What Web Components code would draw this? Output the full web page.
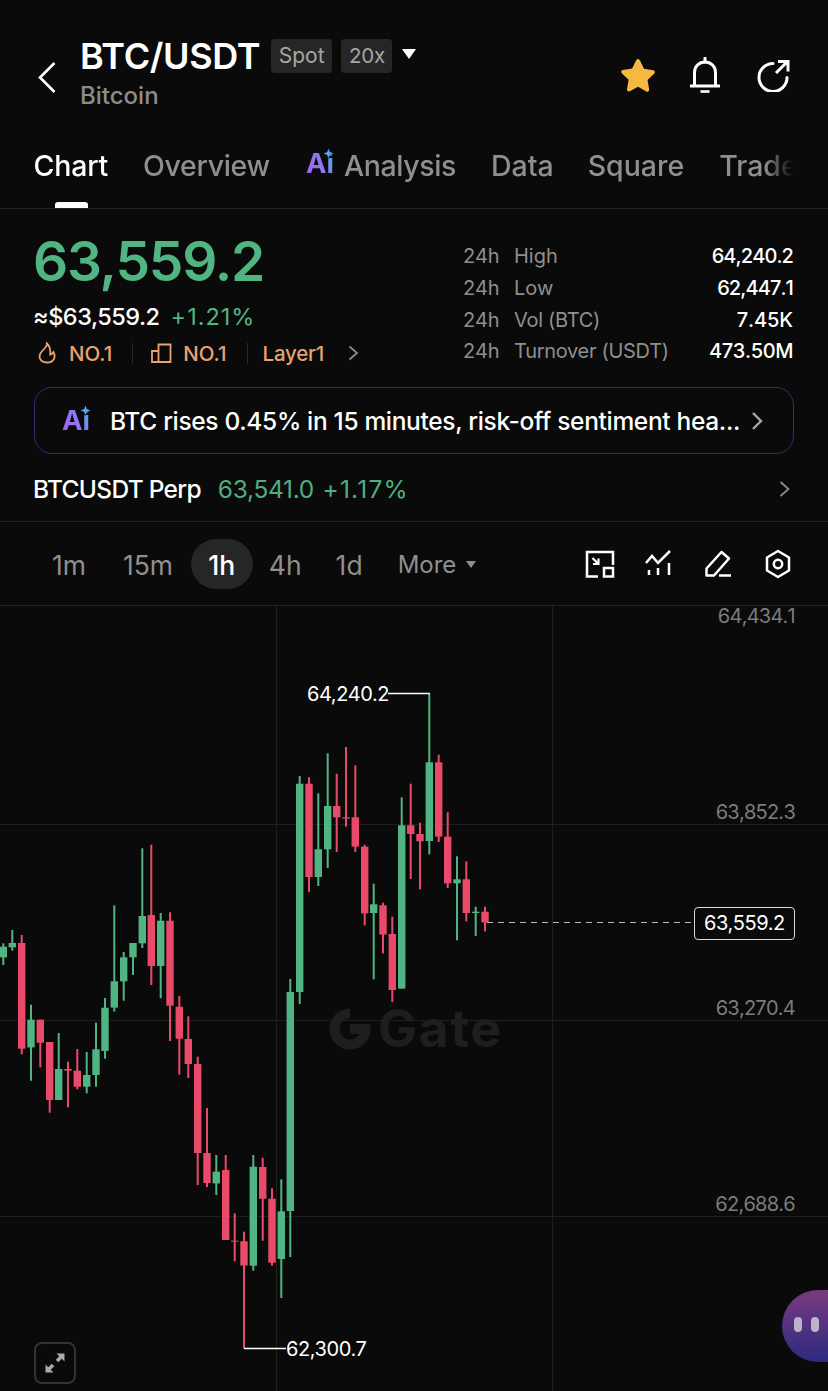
<!DOCTYPE html>
<html lang="en">
<head>
<meta charset="utf-8">
<title>BTC/USDT</title>
<style>
html,body{margin:0;padding:0;background:#0a0a0a;}
body{width:828px;height:1391px;overflow:hidden;font-family:Inter,"Liberation Sans",sans-serif;color:#fff;display:flex;flex-direction:column;}
</style>
</head>
<body>
<app-header></app-header>
<tab-bar></tab-bar>
<price-panel></price-panel>
<time-bar></time-bar>
<kline-chart></kline-chart>
<script>
function def(name, html){
  customElements.define(name, class extends HTMLElement{
    constructor(){super();this.attachShadow({mode:'open'}).innerHTML=html;}
  });
}
const AI_CSS = `.ai{position:relative;display:inline-block;width:29px;height:28px;line-height:28px;font-size:27.5px;font-weight:700;flex:none}
.ai b{font-weight:700;background:linear-gradient(65deg,#a35ff0 0%,#8f78f2 55%,#58a6f5 85%);-webkit-background-clip:text;background-clip:text;color:transparent}
.ai svg{position:absolute;left:17.5px;top:-1px}`;
const AI = `<span class="ai"><b>Ai</b><svg width="11" height="11" viewBox="0 0 11 11"><path d="M5.500 0l1.500 4 4 1.500-4 1.500-1.500 4-1.500-4-4-1.500 4-1.500z" fill="#58a6f5" stroke="#0a0a0a" stroke-width=".4"/></svg></span>`;

def('app-header', `<style>
:host{display:flex;align-items:flex-start;height:130px;box-sizing:border-box;padding:38px 38px 0 38px;flex:none;position:relative}
.back{margin-top:23px;width:18px;height:32px;flex:none}
.col{margin-left:24px;display:flex;flex-direction:column}
.top{display:flex;align-items:center;height:36px}
h1{margin:0;font-size:36px;line-height:36px;font-weight:600;letter-spacing:-.35px}
.b{height:34px;line-height:34px;padding:0 7.5px;background:#262626;border-radius:4px;color:#a6a6a6;font-size:21px;margin-left:9px;box-sizing:border-box}
.b.first{margin-left:11px}
.b.x{font-size:20.5px;letter-spacing:-.3px;padding:0 7.5px 0 8px}
.tri{margin-left:10px;margin-top:-4px}
.sub{font-size:24px;line-height:28px;color:#8c8c8c;margin-top:8px;font-weight:500}
.sp{flex:1}
.ic{display:flex;align-items:center;margin-top:19px}
</style>
<svg class="back" viewBox="0 0 18 32"><path d="M16.500 2L2 16.500 16.500 31" fill="none" stroke="#fff" stroke-width="2.600"/></svg>
<div class="col">
  <div class="top"><h1>BTC/USDT</h1><span class="b first">Spot</span><span class="b x">20x</span>
    <svg class="tri" width="14" height="10" viewBox="0 0 14 10"><path d="M0 0h14L7 10z" fill="#fff"/></svg></div>
  <div class="sub">Bitcoin</div>
</div>
<div class="sp"></div>
<div class="ic">
  <svg width="38" height="36" viewBox="0 0 38 36" style="margin-right:32px"><path d="M19 1.500c.8 0 1.500.5 1.900 1.200l4.500 9.200 10 1.500c1.700.3 2.300 2.300 1.100 3.500l-7.300 7.100 1.700 10c.3 1.700-1.500 3-3 2.200L19 31.200l-8.900 4.700c-1.500.8-3.300-.5-3-2.200l1.700-10-7.300-7.100c-1.200-1.200-.6-3.200 1.100-3.500l10-1.500 4.500-9.200c.4-.7 1.100-1.200 1.900-1.200z" fill="#f5b942" transform="translate(1.400 0.800) scale(.93 .93)"/></svg>
  <svg width="32" height="36" viewBox="0 0 32 36" style="margin-right:35px"><path d="M5.500 28.500V15.500C5.500 9.500 10 5 16 5s10.500 4.500 10.500 10.500v13" fill="none" stroke="#fff" stroke-width="3"/><path d="M1 29h30" stroke="#fff" stroke-width="3"/><path d="M16 1v4" stroke="#fff" stroke-width="3" stroke-linecap="round"/><path d="M11.500 34.500h9" stroke="#fff" stroke-width="2.600"/></svg>
  <svg width="34" height="34" viewBox="0 0 34 34"><path d="M17 5.500A14 14 0 1 0 31 19.500" fill="none" stroke="#fff" stroke-width="3" stroke-linecap="round"/><path d="M20 15L31 4M22 3.500h10v10" fill="none" stroke="#fff" stroke-width="3"/></svg>
</div>`);

def('tab-bar', `<style>
:host{display:block;flex:none;height:79px;box-sizing:border-box;border-bottom:1px solid #222;position:relative}
.row{display:flex;align-items:center;height:70px;padding-left:33.5px;font-size:28.5px;font-weight:500;color:#8f8f8f;white-space:nowrap;width:793px;box-sizing:border-box;overflow:hidden;-webkit-mask-image:linear-gradient(90deg,#000 96.500%,transparent 100%);mask-image:linear-gradient(90deg,#000 96.500%,transparent 100%)}
.row>span{display:block;flex:none}
.on{color:#fff}
.an{display:flex!important;align-items:center;margin-left:36px;height:40px}
.an .ai{margin-right:9px;margin-top:-5px}
${AI_CSS}
i{position:absolute;left:55px;bottom:0;width:33px;height:6px;background:#fff;border-radius:3px 3px 0 0}
</style>
<div class="row"><span class="on" style="letter-spacing:-.2px">Chart</span><span style="margin-left:35px;letter-spacing:-.3px">Overview</span><span class="an">${AI}<span style="letter-spacing:-.4px">Analysis</span></span><span style="margin-left:35px">Data</span><span style="margin-left:34px">Square</span><span style="margin-left:35px">Trade</span></div>
<i></i>`);

def('price-panel', `<style>
:host{display:block;flex:none;height:313px;box-sizing:border-box;padding:0 34px;border-bottom:1px solid #222}
.top{display:flex;justify-content:space-between;height:178px}
.l{padding-top:19px}
.p{font-size:55px;line-height:66px;font-weight:600;color:#50b583;letter-spacing:-1.200px;margin-left:-1px}
.u{font-size:23.5px;line-height:30px;margin-top:8px;margin-left:-1px;display:flex;font-weight:500}
.u span{letter-spacing:-.5px}
.u b{font-weight:400;color:#50b583;letter-spacing:1px;margin-left:11px}
.r{display:flex;align-items:center;height:30px;margin-top:6px;font-size:20.5px;font-weight:500;color:#e8a272}
.r u{width:1px;height:21px;background:#2a2a2a;display:block}
.st{display:grid;grid-template-columns:51px 1fr auto;grid-auto-rows:31.700px;align-items:center;width:330px;margin-right:1px;padding-top:31.500px;font-size:20px;color:#8f8f8f;box-sizing:content-box;align-content:start}
.st span:nth-child(3n){color:#fff;text-align:right;font-weight:500;letter-spacing:-.9px;font-kerning:none}
.lb{letter-spacing:-.3px}
</style>
<div class="top">
 <div class="l">
  <div class="p">63,559.2</div>
  <div class="u"><span>≈$63,559.2</span> <b>+1.21%</b></div>
  <div class="r">
   <svg width="20" height="22" viewBox="0 0 20 22" style="margin-left:3px"><path d="M10 1.500c.6 3-3.600 5.500-6.300 9.400C1.500 14.200 2.300 20.500 10 20.500s8.800-6.300 6.400-10.500c-.9 1.500-2 2.300-3.200 2.500C13.600 8.500 12.500 4 10 1.500z" fill="none" stroke="#e8a272" stroke-width="1.800"/></svg>
   <span style="margin-left:12px">NO.1</span><u style="margin-left:20px"></u>
   <svg width="21" height="20" viewBox="0 0 21 20" style="margin-left:18px"><path d="M1 19V8h6.500v11zM7.500 19V1.500h12V19zM1 19h18.500" fill="none" stroke="#e8a272" stroke-width="1.800"/></svg>
   <span style="margin-left:11px">NO.1</span><u style="margin-left:20px"></u>
   <span style="margin-left:15px;letter-spacing:-.2px">Layer1</span>
   <svg width="11" height="16" viewBox="0 0 11 16" style="margin-left:24px"><path d="M1.500 1.500L9 8l-7.500 6.500" fill="none" stroke="#8f8f8f" stroke-width="1.700"/></svg>
  </div>
 </div>
 <div class="st">
  <span>24h</span><span>High</span><span>64,240.2</span>
  <span>24h</span><span>Low</span><span>62,447.1</span>
  <span>24h</span><span class="lb">Vol (BTC)</span><span style="letter-spacing:-.1px">7.45K</span>
  <span>24h</span><span class="lb">Turnover (USDT)</span><span style="letter-spacing:-.4px">473.50M</span>
 </div>
</div>
<ai-banner></ai-banner>
<perp-row></perp-row>`);

def('ai-banner', `<style>
:host{display:flex;align-items:center;height:67px;box-sizing:border-box;border:1.500px solid #3a2a78;border-radius:18px;padding:0 29px 0 27px;font-size:24.5px;font-weight:500;white-space:nowrap}
${AI_CSS}
.ai{margin-right:19px;margin-top:-2px}
.t{flex:1;letter-spacing:-.33px}
</style>${AI}<span class="t">BTC rises 0.45% in 15 minutes, risk-off sentiment hea...</span>
<svg width="13" height="20" viewBox="0 0 13 20"><path d="M2 2l8 8-8 8" fill="none" stroke="#a8a8a8" stroke-width="2.400"/></svg>`);

def('perp-row', `<style>
:host{display:flex;align-items:center;height:67px;box-sizing:border-box;padding-top:2px;font-size:24.5px;white-space:nowrap}
b{font-weight:500;color:#fff;letter-spacing:-.7px;margin-left:-1px}
.g{color:#4fae80;margin-left:17px;letter-spacing:-.3px}
.g+.g{margin-left:8.5px;letter-spacing:1.200px}
.sp{flex:1}
svg{margin-right:4px}
</style><b>BTCUSDT Perp</b><span class="g">63,541.0</span><span class="g">+1.17%</span><span class="sp"></span>
<svg width="11" height="16" viewBox="0 0 11 16"><path d="M1.500 1L9.500 8l-8 7" fill="none" stroke="#8f8f8f" stroke-width="1.700"/></svg>`);

def('time-bar', `<style>
:host{display:flex;align-items:center;flex:none;height:84px;box-sizing:border-box;border-bottom:1px solid #222;padding-left:52px;font-size:26.5px;color:#8f8f8f;white-space:nowrap;font-weight:400}
span{display:block;padding-top:2px}
.on{background:#262626;color:#fff;width:62px;height:50px;line-height:48px;text-align:center;border-radius:25px;margin-left:18px;margin-right:16px;box-sizing:border-box;font-weight:500}
.more{display:flex;align-items:center;margin-left:35px;font-size:24px}
.more svg{margin-left:10px}
.ics{display:flex;align-items:center;position:absolute;left:585px}
</style>
<span>1m</span><span style="margin-left:37px;letter-spacing:-.1px">15m</span><span class="on">1h</span><span>4h</span><span style="margin-left:34px">1d</span>
<span class="more">More<svg width="10" height="7" viewBox="0 0 10 7"><path d="M0 0h10L5 7z" fill="#8f8f8f"/></svg></span>
<div class="ics">
 <svg width="30" height="28" viewBox="0 0 30 28" fill="none" stroke="#fff" stroke-width="2.500"><path d="M13 26.500H2V2h26v13"/><path d="M7.500 8l6 6M13.500 8.500V14H8" stroke-width="2.200"/><rect x="19" y="18" width="9" height="8.500" stroke-width="2.500"/></svg>
 <svg width="28" height="28" viewBox="0 0 28 28" style="margin-left:30px" fill="none" stroke="#fff" stroke-width="2.500"><path d="M1 13L7 6l6 7L25 1"/><path d="M4 25v-5M13 25v-7M24 25V13"/></svg>
 <svg width="28" height="28" viewBox="0 0 28 28" style="margin-left:31px" fill="none" stroke="#fff" stroke-width="2.500" stroke-linejoin="round"><path d="M17.500 2L25 8.500 10 25.500H2.500v-7z"/><path d="M15 25.500h12"/></svg>
 <svg width="28" height="30" viewBox="0 0 28 30" style="margin-left:32px" fill="none" stroke="#fff" stroke-width="2.500" stroke-linejoin="round"><path d="M14 2l11 6.500v13L14 28 3 21.500v-13z"/><circle cx="14" cy="15" r="4.200"/></svg>
</div>`);

/* candle data: [centre x, wick top, wick bottom, body top, body bottom, colour] in screen px, read from the reference */
const Z6=(c,a,b,d,e,k)=>[c/3,830+a/3,830+b/3,830+d/3,830+e/3,k];
const Z7=(c,a,b,d,e,k)=>[170+c/3,1100+a/3,1100+b/3,1100+d/3,1100+e/3,k];
const Z8=(c,a,b,d,e,k)=>[280+c/3,680+a/3,680+b/3,680+d/3,680+e/3,k];
const CANDLES=[
 Z6(10,340,405,350,382,'g'),Z6(37,300,362,339,352,'g'),Z6(65,315,673,339,656,'r'),Z6(93,524,752,569,652,'g'),
 Z6(121,569,712,569,638,'r'),Z6(149,636,848,636,810,'r'),Z6(176,609,810,717,810,'g'),Z6(204,695,832,717,722,'r'),
 Z6(232,657,778,722,770,'r'),Z6(260,666,790,735,770,'g'),Z6(288,578,770,658,735,'g'),Z6(315,504,686,533,663,'g'),
 Z6(343,226,545,454,533,'g'),Z6(371,366,512,382,454,'g'),Z6(399,339,435,339,382,'g'),Z6(427,55,354,258,340,'g'),
 Z6(454,44,465,255,408,'r'),Z6(482,249,505,272,408,'g'),Z6(510,247,633,272,527,'r'),Z6(538,498,734,530,626,'r'),
 Z6(565,559,744,627,702,'r'),[197.7,1056.7,1185,1064,1153,'r'],[207,1108,1187,1153,1183,'r'],
 Z7(139,165,285,215,250,'g'),Z7(167,165,420,210,420,'r'),Z7(194,340,484,422,425,'r'),Z7(222,395,745,424,497,'r'),
 Z7(250,165,512,200,497,'g'),Z7(278,173,422,201,296,'r'),Z7(306,265,497,296,488,'r'),Z7(334,238,594,334,477,'g'),
 [290.3,979,1257,992,1211,'g'],[299.7,776,1004,783.7,992,'g'],
 Z8(87,292,636,311,591,'r'),Z8(115,340,618,508,591,'g'),Z8(143,220,564,378,508,'g'),Z8(170,281,516,378,412,'r'),
 Z8(198,201,440,412,416,'r'),Z8(226,256,516,412,500,'r'),Z8(254,494,736,500,700,'r'),Z8(281,611,898,673,699,'g'),
 Z8(309,668,820,676,764,'r'),[392.3,916.7,1002,934,990,'r'],Z8(365,352,926,436,926,'g'),Z8(392,311,597,436,462,'r'),
 Z8(420,428,628,462,484,'r'),Z8(448,40,523,247,483,'g'),Z8(476,224,486,247,470,'r'),Z8(503,397,624,470,610,'r'),
 Z8(531,529,781,598,610,'g'),Z8(559,544,724,598,699,'r'),Z8(587,680,768,695,699,'g'),Z8(615,680,754,695,727,'r')
];
const TOP=606, COL={g:'#50b583',r:'#ea4a6a'};
const shapes=CANDLES.map(([x,a,b,d,e,k])=>{
  const c=COL[k];
  return `<rect x="${(x-1).toFixed(1)}" y="${(a-TOP).toFixed(1)}" width="2" height="${(b-a).toFixed(1)}" fill="${c}"/>`+
         `<rect x="${(x-3.7).toFixed(1)}" y="${(d-TOP).toFixed(1)}" width="7.4" height="${(e-d).toFixed(1)}" fill="${c}"/>`;
}).join('');

def('kline-chart', `<style>
:host{display:block;flex:none;position:relative;height:785px;overflow:hidden;font-size:20px}
svg.c{position:absolute;left:0;top:0}
.y{position:absolute;right:33px;color:#7c7c7c;line-height:18px;letter-spacing:-.75px;font-kerning:none}
.tag{position:absolute;color:#fff;line-height:24px;font-weight:400;letter-spacing:-.4px}
.now{position:absolute;left:694px;top:301px;width:101px;height:33px;box-sizing:border-box;border:1px solid #d8d8d8;border-radius:4px;background:#0a0a0a;color:#fff;text-align:center;line-height:31px;letter-spacing:-.4px}
.wm{position:absolute;left:328px;top:401px;display:flex;align-items:center;color:#1e1e1e;font-size:52px;font-weight:700;line-height:44px;letter-spacing:1.5px}
.wm svg{margin-right:6px}
.exp{position:absolute;left:34px;top:736px;width:42px;height:42px;box-sizing:border-box;border:2px solid #333;border-radius:8px;display:flex;align-items:center;justify-content:center}
.bub{position:absolute;left:782px;top:684px;width:92px;height:72px;border-radius:36px;background:linear-gradient(180deg,#7a3a80 0%,#2c2a80 100%)}
.bub i{position:absolute;top:27px;width:8px;height:15px;border-radius:4px;background:#b9b4c8}
</style>
<svg class="c" width="828" height="785">
 <g stroke="#1e1e1e" stroke-width="1">
  <path d="M276.500 0V785M552.500 0V785M0 218.500H828M0 414.500H828M0 610.500H828"/>
 </g>
 ${shapes}
 <path d="M388 87.500H430M244 742.500H286" stroke="#fff" stroke-width="1.500" fill="none"/>
 <path d="M487 316.500H694" stroke="#bbb" stroke-width="1.200" stroke-dasharray="6 5" fill="none"/>
</svg>
<div class="wm"><svg width="44" height="42" viewBox="0 0 44 42"><path d="M22 5.500A15.500 15.500 0 1 0 37.500 21H22" fill="none" stroke="#1e1e1e" stroke-width="10"/></svg><span>Gate</span></div>
<div class="y" style="top:1px">64,434.1</div>
<div class="y" style="top:197px">63,852.3</div>
<div class="y" style="top:393px">63,270.4</div>
<div class="y" style="top:589px">62,688.6</div>
<div class="tag" style="left:307px;top:76px">64,240.2</div>
<div class="tag" style="left:286px;top:731px">62,300.7</div>
<div class="now">63,559.2</div>
<div class="exp"><svg width="22" height="22" viewBox="0 0 22 22"><path d="M12.500 1.500H20.500V9.500zM1.500 20.500V12.500L9.500 20.500z" fill="#aaa"/><path d="M17 5L13 9M5 17L9 13" stroke="#aaa" stroke-width="3.600"/></svg></div>
<div class="bub"><i style="left:12px"></i><i style="left:29px"></i></div>`);
</script>
</body>
</html>
